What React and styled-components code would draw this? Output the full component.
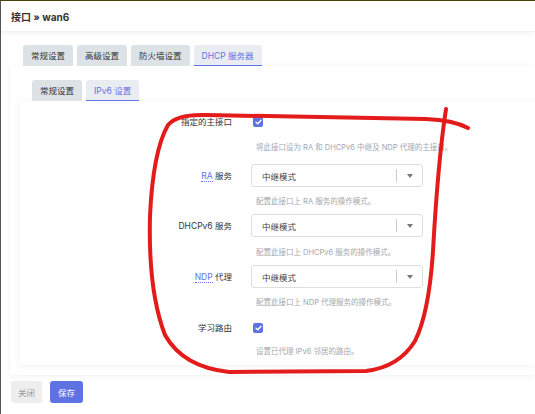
import React from 'react'
import styled, { createGlobalStyle } from 'styled-components';

const Global = createGlobalStyle`
  html, body { margin:0; padding:0; background:#fff; }
  body {
    font-family: "Inter", "Noto Sans CJK SC", sans-serif;
    color:#333;
    width:535px;
    height:414px;
    overflow:hidden;
  }
`;

const Page = styled.div`
  position:relative;
  width:535px;
  height:414px;
  box-sizing:border-box;
  border-left:1px solid #555;
  border-top:1px solid #4a4300;
`;

const Header = styled.div`
  height:30px;
  padding-left:10px;
  display:flex;
  align-items:center;
  font-size:10px;
  font-weight:700;
  color:#333;
  box-shadow:0 2px 4px rgba(0,0,0,0.04);
  border-bottom:1px solid #f2f3f5;
`;

const Body = styled.div`
  padding:13px 0 0 9px;
`;

const Tabs = styled.div`
  display:flex;
  gap:${p => p.gap || 4}px;
  padding-left:${p => p.indent}px;
`;

const Tab = styled.div`
  height:21px;
  padding:0 ${p => p.pad || 8}px;
  box-sizing:border-box;
  display:flex;
  align-items:center;
  font-size:8.5px;
  border-radius:3px 3px 0 0;
  background:${p => p.active ? '#e9edf1' : '#dde2e7'};
  color:${p => p.active ? '#5e72e4' : '#333'};
  border-bottom:${p => p.active ? '1.5px solid #5e72e4' : '1.5px solid transparent'};
`;

const Panel = styled.div`
  background:#fff;
  box-shadow:0 1px 6px rgba(30,40,80,0.07);
  padding:${p => p.pad};
  height:${p => p.h}px;
  box-sizing:border-box;
`;

const Form = styled.div`
  padding-top:15px;
  display:flex;
  flex-direction:column;
`;

const Row = styled.div`
  display:grid;
  grid-template-columns:212px 1fr;
  grid-template-rows:${p => p.h}px auto;
  column-gap:19px;
  align-items:center;
`;

const Label = styled.div`
  text-align:right;
  font-size:8.5px;
  line-height:12px;
  color:#333;
`;

const Abbr = styled.span`
  color:#5e72e4;
  border-bottom:1px dotted #5e72e4;
`;

const Check = styled.div`
  width:10px;
  height:10px;
  margin-left:2px;
  border-radius:2px;
  background:#5e72e4;
  display:flex;
  align-items:center;
  justify-content:center;
`;

const Desc = styled.div`
  grid-column:2;
  font-size:7.5px;
  color:#a5a8ae;
  padding-left:${p => p.indent || 0}px;
  height:${p => p.h}px;
  display:flex;
  align-items:center;
`;

const Select = styled.div`
  width:172px;
  height:23px;
  box-sizing:border-box;
  border:1px solid #dcdee3;
  border-radius:3px;
  display:flex;
  align-items:center;
  padding-left:10px;
  font-size:8.5px;
  color:#444;
`;

const SelText = styled.span`
  flex:1;
`;

const Sep = styled.span`
  width:1px;
  height:13px;
  background:#ccc;
`;

const Caret = styled.span`
  width:25px;
  display:flex;
  justify-content:center;
  align-items:center;
`;

const Footer = styled.div`
  display:flex;
  gap:8px;
  padding:6px 0 0 1px;
`;

const Btn = styled.button`
  height:22px;
  padding:0 ${p => p.primary ? 8 : 7}px;
  border:none;
  border-radius:3px;
  font-family:inherit;
  font-size:8.5px;
  background:${p => p.primary ? '#5e72e4' : '#eeeeee'};
  color:${p => p.primary ? '#fff' : '#999'};
`;

const Scribble = styled.svg`
  position:absolute;
  left:0;
  top:0;
  pointer-events:none;
`;

const Tick = () => (
  <svg width="7" height="6" viewBox="0 0 7 6">
    <path d="M1 3.2 L2.8 4.8 L6 1.2" fill="none" stroke="#fff" strokeWidth="1.3" strokeLinecap="round" strokeLinejoin="round"/>
  </svg>
);

const ModeSelect = () => (
  <Select>
    <SelText>中继模式</SelText>
    <Sep/>
    <Caret>
      <svg width="6" height="4" viewBox="0 0 6 4"><path d="M0 0 H6 L3 4 Z" fill="#777"/></svg>
    </Caret>
  </Select>
);

const App = () => {
  return (
    <Page>
      <Global/>
      <Header>接口 » wan6</Header>
      <Body>
        <Tabs indent={13}>
          <Tab>常规设置</Tab>
          <Tab>高级设置</Tab>
          <Tab>防火墙设置</Tab>
          <Tab active>DHCP 服务器</Tab>
        </Tabs>
        <Panel pad="14px 0 0 10px" h={309}>
          <Tabs indent={12}>
            <Tab>常规设置</Tab>
            <Tab active>IPv6 设置</Tab>
          </Tabs>
          <Panel h={264}>
            <Form>
              <Row h={12}>
                <Label>指定的主接口</Label>
                <Check><Tick/></Check>
                <Desc h={36} indent={5}>将此接口设为 RA 和 DHCPv6 中继及 NDP 代理的主接口。</Desc>
              </Row>
              <Row h={23}>
                <Label><Abbr>RA</Abbr> 服务</Label>
                <ModeSelect/>
                <Desc h={27} indent={5}>配置此接口上 RA 服务的操作模式。</Desc>
              </Row>
              <Row h={23}>
                <Label>DHCPv6 服务</Label>
                <ModeSelect/>
                <Desc h={28} indent={5}>配置此接口上 DHCPv6 服务的操作模式。</Desc>
              </Row>
              <Row h={23}>
                <Label><Abbr>NDP</Abbr> 代理</Label>
                <ModeSelect/>
                <Desc h={27} indent={5}>配置此接口上 NDP 代理服务的操作模式。</Desc>
              </Row>
              <Row h={26}>
                <Label>学习路由</Label>
                <Check><Tick/></Check>
                <Desc h={18} indent={5}>设置已代理 IPv6 邻居的路由。</Desc>
              </Row>
            </Form>
          </Panel>
        </Panel>
        <Footer>
          <Btn>关闭</Btn>
          <Btn primary>保存</Btn>
        </Footer>
      </Body>
      <Scribble width="535" height="414" viewBox="0 0 535 414">
        <path
          d="M467 127 Q452 119 425 118 L205 114 Q176 113 167 124 Q152 150 149 215 Q147 290 164 334 Q182 366 228 371 L365 370 Q398 366 414 340 Q428 312 432 250 Q437 160 445 108"
          fill="none" stroke="#e41b1b" strokeWidth="4" strokeLinecap="round" strokeLinejoin="round"
        />
      </Scribble>
    </Page>
  )
}

export default App;
